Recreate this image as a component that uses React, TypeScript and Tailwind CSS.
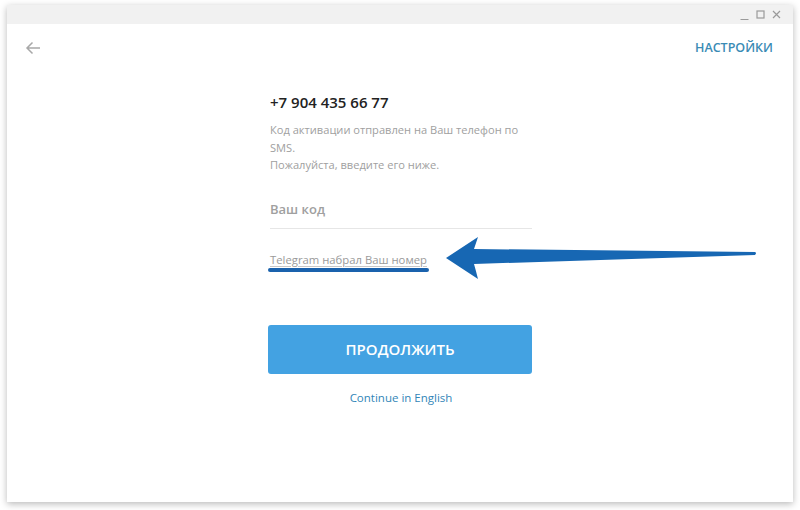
import React from 'react';

const font = { fontFamily: '"Open Sans", "Noto Sans", sans-serif' };

function WindowControls() {
  return (
    <div className="flex items-center gap-[7px] pr-[12px] text-[#9a9a9a]">
      <svg width="9" height="9" viewBox="0 0 9 9" className="mt-[4px]">
        <line x1="0.5" y1="7.5" x2="8.5" y2="7.5" stroke="currentColor" strokeWidth="1" />
      </svg>
      <svg width="9" height="9" viewBox="0 0 9 9">
        <rect x="1" y="1" width="7" height="7" fill="none" stroke="currentColor" strokeWidth="1.2" />
      </svg>
      <svg width="9" height="9" viewBox="0 0 9 9">
        <path d="M1 1 L8 8 M8 1 L1 8" stroke="currentColor" strokeWidth="1.2" />
      </svg>
    </div>
  );
}

export default function App() {
  return (
    <div className="relative w-[800px] h-[510px] bg-white overflow-hidden" style={font}>
      <div className="pt-[5px] pl-[7px]">
        <div className="w-[786px] h-[497px] bg-white shadow-[0_2px_7px_rgba(0,0,0,0.28)] flex flex-col">
          {/* title bar */}
          <div className="h-[19px] bg-[#f1f1f1] flex items-center justify-end">
            <WindowControls />
          </div>

          {/* header */}
          <div className="h-12 flex items-center justify-between pl-[18px] pr-[20px]">
            <svg width="16" height="14" viewBox="0 0 16 14" className="text-[#a8a8a8]">
              <path d="M15 7 H2 M7.5 1.5 L2 7 L7.5 12.5" fill="none" stroke="currentColor" strokeWidth="1.5" />
            </svg>
            <span className="text-[12.5px] font-semibold text-[#3a8bb5]">НАСТРОЙКИ</span>
          </div>

          {/* form */}
          <div className="w-[262px] ml-[263px] flex flex-col">
            <div className="mt-[20px] text-[15px] leading-[20px] font-semibold text-[#222]">+7 904 435 66 77</div>
            <p className="mt-[9px] text-[11.1px] leading-[17.5px] text-[#a0a0a0]">
              Код активации отправлен на Ваш телефон по SMS.
              <br />
              Пожалуйста, введите его ниже.
            </p>
            <div className="mt-[26px] pb-[10px] border-b border-[#e6e6e6] text-[13px] leading-[18px] font-semibold text-[#a0a0a0]">
              Ваш код
            </div>
            <div className="mt-[23px] text-[11.3px] leading-[16px] text-[#9a9a9a] underline underline-offset-2 decoration-[#c8c8c8]">
              Telegram набрал Ваш номер
            </div>
            <button className="mt-[57px] -ml-[2px] w-[264px] h-[49px] rounded-[3px] bg-[#43a2e2] text-white text-[15px] font-semibold">
              ПРОДОЛЖИТЬ
            </button>
            <div className="mt-[16px] text-center text-[11.5px] leading-[16px] text-[#3286b8]">Continue in English</div>
          </div>
        </div>
      </div>

      {/* annotation drawn over the screenshot */}
      <svg className="absolute left-0 top-0 pointer-events-none" width="800" height="510" viewBox="0 0 800 510">
        <path d="M270 270 L427 270" stroke="#1a62ad" strokeWidth="4" strokeLinecap="round" />
        <path
          d="M446 258 L478 237 Q476 243 474 249 L755 252 Q757 253 755 255 L474 264 Q476 271 478 279 Z"
          fill="#1767b3"
        />
      </svg>
    </div>
  );
}
